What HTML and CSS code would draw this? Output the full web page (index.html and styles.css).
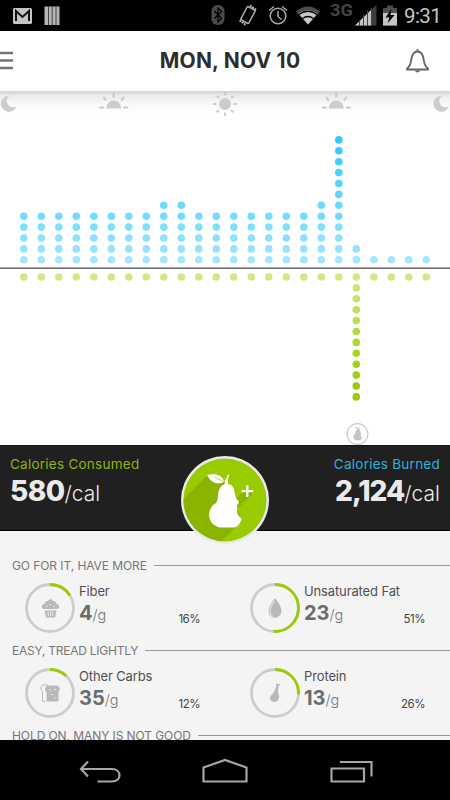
FILE: index.html
```html
<!DOCTYPE html>
<html lang="en">
<head>
    <meta charset="UTF-8">
    <meta name="viewport" content="width=device-width, initial-scale=1.0">
    <title>Daily Calories</title>
    <link rel="stylesheet" href="styles.css">
</head>
<body>
    <div class="status-bar">
        <svg class="status-icons" width="400" height="31" viewBox="0 0 400 31">
            <rect x="13" y="8" width="19" height="16" rx="1.5" fill="#c4c4c4"/>
            <path d="M16 21V11l6.500 6 6.500-6v10" fill="none" stroke="#111" stroke-width="2"/>
            <path d="M44.500 6.500h15V25h-15z" fill="#b5b5b5"/>
            <path d="M48.500 6v19M52.200 6v19M56 6v19" stroke="#444" stroke-width="1"/>
            <rect x="211.500" y="5" width="13" height="20" rx="6" fill="#4a4a4a"/>
            <path d="M214.500 11l7 7.500-3.500 3.500V8l3.500 3.500-7 7" fill="none" stroke="#000" stroke-width="1.300"/>
            <g fill="none" stroke="#aaa">
                <rect x="243.500" y="7.500" width="9" height="15" rx="1" stroke-width="1.500" transform="rotate(28 248 15)"/>
                <path d="M239.500 20.500l6.500 4.500M250 5.500l6.500 4.500" stroke-width="2" stroke-dasharray="2 .7"/>
                <circle cx="278" cy="16" r="7.800" stroke-width="1.500"/>
                <path d="M278 11v5.500l3.500 3M269 10.500l5-4M282 6.500l5 4" stroke-width="1.500"/>
            </g>
            <path d="M308 24.500L296 11.500Q308 1.500 320 11.500z" fill="#4d4d4d"/>
            <path d="M308 24.500l-9.500-11Q308 7 317.500 13.500z" fill="#c9c9c9"/>
            <path d="M299 14.500Q308 8 317 14.500M302.500 18.500Q308 14.500 313.500 18.500" fill="none" stroke="#000" stroke-width="1.300"/>
            <text class="network" x="330" y="16" textLength="23" lengthAdjust="spacingAndGlyphs">3G</text>
            <path d="M355 25.500L376.500 5v20.500z" fill="#3d3d3d"/>
            <path d="M355 25.500l16.500-16v16z" fill="#c4c4c4"/>
            <path d="M359.500 20v6M363.500 14v12M367.500 10v16M371.500 8v18" stroke="#444"/>
            <path d="M383 25.500V8h4V5.500h6V8h4v17.500z" fill="#4d4d4d"/>
            <path d="M383 13h14v12.500h-14z" fill="#c4c4c4"/>
            <path d="M391.500 9l-6 8.500h4l-2 6 7-8.500h-4z" fill="#000"/>
        </svg>
        <span class="clock">9:31</span>
    </div>

    <header>
        <svg class="menu" width="13" height="20" viewBox="0 0 13 20">
            <path d="M0 2h13M0 9.500h13M0 17h13" stroke="#777479" stroke-width="2.500"/>
        </svg>
        <h1>MON, NOV 10</h1>
        <svg class="bell" width="25" height="26" viewBox="0 0 25 26">
            <path d="M2 20.500c4-2.500 3.500-5 4.500-10C7.300 6 9 3.500 12.500 3.500S17.700 6 18.500 10.500c1 5 .5 7.500 4.500 10v1H2z" fill="none" stroke="#666" stroke-width="1.800"/>
            <path d="M10.500 2.500Q12.500-.5 14.500 2.500z M9.500 22.500h6q-3 4-6 0z" fill="#666"/>
        </svg>
    </header>

    <main>
        <svg class="chart" id="chart" width="450" height="354" viewBox="0 91 450 354">
            <defs>
                <g id="moon"><path d="M1-8A8 8 0 1 0 8 2.500A6 6 0 0 1 1-8z"/></g>
                <g id="sunrise">
                    <path d="M-7.500 4.500a7.500 8 0 0 1 15 0z"/>
                    <path d="M-14.500 3.500h5M9.500 3.500h5M-10.500-7l3 3.500M10.500-7l-3 3.500M0-11.500v5" fill="none" stroke="#ccc" stroke-width="2.200"/>
                </g>
                <g id="sun">
                    <circle r="6"/>
                    <path d="M0-12v3.500M0 8.500V12M-12 0h3.500M8.500 0H12M-8.300-8.300l2.300 2.300M6 6l2.300 2.300M-8.300 8.300L-6 6M6-6l2.300-2.300" fill="none" stroke="#ccc" stroke-width="2"/>
                </g>
            </defs>
            <g fill="#ccc">
                <use href="#moon" x="8.500" y="103.700"/>
                <use href="#sunrise" x="113.700" y="104"/>
                <use href="#sun" x="225" y="104"/>
                <use href="#sunrise" x="336.300" y="104"/>
                <use href="#moon" x="441" y="103.700"/>
            </g>
            <path d="M0 267.500h450" stroke="#aaa"/>
            <path d="M0 268.500h450" stroke="#6e6e6e"/>
            <circle cx="357.500" cy="434" r="10.400" fill="none" stroke="#ccc" stroke-width="1.200"/>
            <path d="M356.500 430.500q.5-1.500 1.500-1.500 1.500 0 2 2.500l.7 2.500-.3 2.200 1.100 2.300-1.500 1.500h-4c-3.500-1-2-5-.8-6.200zM358 429.500q0-2 2-2M354.500 427.500q3-.5 3 1.500" fill="#c4c4c4" stroke="#c4c4c4" stroke-width=".7"/>
        </svg>

        <section class="summary">
            <div class="total consumed">
                <div class="label">Calories Consumed</div>
                <div class="value"><b>580</b><span>/cal</span></div>
            </div>
            <svg class="add-food" width="90" height="90" viewBox="0 0 90 90">
                <defs>
                    <clipPath id="badge"><circle cx="45" cy="45" r="41.500"/></clipPath>
                </defs>
                <circle cx="45" cy="45" r="44" fill="#e9e9e9"/>
                <circle cx="45" cy="45" r="41.500" fill="#9c0"/>
                <path d="M27.500 20L-5 52.500V90h43l23.500-24L47 25zM62 37.500L55 44.500V56l18.500-18.500z" fill="#8ab400" clip-path="url(#badge)"/>
                <path d="M46.500 29c4.500-.5 7 2.500 7.800 6.500.6 4.500 1.700 6.500 2.500 9 2 .8 2.400 2.500 1.700 4-2 2-1.500 3.500-1 5-1.500 4 .5 8 4.300 10.300-1.500 4.500-4 8.700-8.300 8.700H42c-9-.5-13.500-7-12.800-14 .5-5 3.300-8.500 6.800-10.500 2.500-3 1.500-7 2.500-11 1-4.500 3.500-7.500 8-8z" fill="#fff"/>
                <path d="M44.500 30q.8-3 0-4.500 2.500-1.500 3-5.500l2-.5q-2 4-1.500 10.500z" fill="#fff"/>
                <path d="M27 20c7-1.500 14-1 17.500 6.500-6 4-13 2-17.500-6.500z" fill="#fff"/>
                <path d="M34.500 22.500l9.500 4" stroke="#9c0" stroke-width=".7"/>
                <path d="M67.300 30.300V42M61.500 36.200h11.800" stroke="#fff" stroke-width="2.300"/>
            </svg>
            <div class="total burned">
                <div class="label">Calories Burned</div>
                <div class="value"><b>2,124</b><span>/cal</span></div>
            </div>
        </section>

        <section class="nutrients">
            <h2 class="more"><span>GO FOR IT, HAVE MORE</span></h2>
            <div class="row">
                <div class="nutrient">
                    <svg class="ring" width="50" height="50" viewBox="0 0 50 50">
                        <circle class="track" cx="25" cy="25" r="23.500"/>
                        <circle class="progress" cx="25" cy="25" r="23.500" pathLength="100" stroke-dasharray="16 100"/>
                        <path d="M19 26c-3 0-3-5 .5-5 .5-3 2.500-3 3.500-3 1-2.500 4.500-2.500 5 0 2 0 3 1 3.500 3 3.500 0 3.500 5 .5 5z" fill="#b9b9b9"/>
                        <path d="M19.500 27.500h12l-1.500 7h-9z" fill="#b9b9b9"/>
                        <path d="M23 28.500l.5 4.500M25.500 28.500V33M28 28.500l-.5 4.500M21 23.500h1.500M24.500 21.500H26M28.500 23.500H30" stroke="#f4f4f4" stroke-width=".8"/>
                    </svg>
                    <div class="info">
                        <div class="name">Fiber</div>
                        <div class="amount"><b>4</b><span>/g</span></div>
                    </div>
                    <div class="percent">16%</div>
                </div>
                <div class="nutrient">
                    <svg class="ring" width="50" height="50" viewBox="0 0 50 50">
                        <circle class="track" cx="25" cy="25" r="23.500"/>
                        <circle class="progress" cx="25" cy="25" r="23.500" pathLength="100" stroke-dasharray="51 100"/>
                        <path d="M25 15q6.500 8.500 6.500 13a6.500 6.700 0 0 1-13 0Q18.500 23.500 25 15z" fill="#b9b9b9"/>
                        <path d="M24.500 18q-5 7-4.500 10.500.5 3.500 3 5" fill="none" stroke="#f4f4f4" stroke-width=".9"/>
                    </svg>
                    <div class="info">
                        <div class="name">Unsaturated Fat</div>
                        <div class="amount"><b>23</b><span>/g</span></div>
                    </div>
                    <div class="percent">51%</div>
                </div>
            </div>

            <h2 class="easy"><span>EASY, TREAD LIGHTLY</span></h2>
            <div class="row">
                <div class="nutrient">
                    <svg class="ring" width="50" height="50" viewBox="0 0 50 50">
                        <circle class="track" cx="25" cy="25" r="23.500"/>
                        <circle class="progress" cx="25" cy="25" r="23.500" pathLength="100" stroke-dasharray="12 100"/>
                        <path d="M21.500 24c-2.500-2-1.500-6.500 2-6.500h8c3.500 0 4 4.500 2 6.500v9.500h-12z" fill="#b9b9b9"/>
                        <path d="M23 17h-4c-3.500 0-4 4.500-1.500 6.500v10H20" fill="none" stroke="#b9b9b9"/>
                        <path d="M24 22h1.500M29.500 21.500H31M26 26.500h1.500M29.500 30H31" stroke="#f4f4f4"/>
                    </svg>
                    <div class="info">
                        <div class="name">Other Carbs</div>
                        <div class="amount"><b>35</b><span>/g</span></div>
                    </div>
                    <div class="percent">12%</div>
                </div>
                <div class="nutrient">
                    <svg class="ring" width="50" height="50" viewBox="0 0 50 50">
                        <circle class="track" cx="25" cy="25" r="23.500"/>
                        <circle class="progress" cx="25" cy="25" r="23.500" pathLength="100" stroke-dasharray="26 100"/>
                        <path d="M26.500 17.500q-1.500-2 .5-2 1 1 3 .5.5 1.500-1.500 2l-.5 7c2.500 4 .5 9-3.500 9-4.500 0-5.500-4-3.500-6.500 2-2 4-4.500 5.500-10z" fill="#b9b9b9"/>
                    </svg>
                    <div class="info">
                        <div class="name">Protein</div>
                        <div class="amount"><b>13</b><span>/g</span></div>
                    </div>
                    <div class="percent">26%</div>
                </div>
            </div>

            <h2 class="hold"><span>HOLD ON, MANY IS NOT GOOD</span></h2>
        </section>
    </main>

    <nav>
        <svg width="450" height="60" viewBox="0 0 450 60" fill="none" stroke="#a5a5a5" stroke-width="2.200">
            <path d="M88 21.500l-7 7.500 7 7.500M81 29h31c10 0 10 12.500 0 12.500H97.500"/>
            <path d="M203.500 41.500V27.500L225 20l21.500 7.500v14z"/>
            <path d="M331.500 28.500h32.500v13h-32.500zM340 22h31.500v14.500"/>
        </svg>
    </nav>

    <script>
        // one entry per hour
        const burned = [5, 5, 5, 5, 5, 5, 5, 5, 6, 6, 5, 5, 5, 5, 5, 5, 5, 6, 12, 2, 1, 1, 1, 1];
        const consumed = burned.map((_, hour) => hour === 19 ? 12 : 1);
        const chart = document.getElementById('chart');

        function mix(from, to, amount) {
            return 'rgb(' + from.map((c, i) => Math.round(c + (to[i] - c) * amount)).join(',') + ')';
        }

        function drawDots(counts, startY, step, from, to) {
            counts.forEach((count, hour) => {
                for (let i = 0; i < count; i++) {
                    const dot = document.createElementNS('http://www.w3.org/2000/svg', 'circle');
                    dot.setAttribute('cx', 23.8 + hour * 17.5);
                    dot.setAttribute('cy', startY + i * step);
                    dot.setAttribute('r', 3.8);
                    dot.setAttribute('fill', mix(from, to, Math.min(i / 10, 1)));
                    chart.appendChild(dot);
                }
            });
        }

        drawDots(burned, 259.8, -10.9, [160, 231, 255], [51, 204, 255]);
        drawDots(consumed, 277, 10.9, [209, 232, 133], [153, 204, 0]);
    </script>
</body>
</html>
```
FILE: styles.css
```css
body {
    width: 450px;
    height: 800px;
    margin: 0;
    overflow: hidden;
    display: flex;
    flex-direction: column;
    font-family: Inter, Arial, sans-serif;
    background-color: #fff;
}

svg {
    display: block;
    flex-shrink: 0;
}

.status-bar {
    display: flex;
    height: 31px;
    flex-shrink: 0;
    background-color: #000;
}

.network {
    font: bold 16px Roboto, sans-serif;
    fill: #444;
}

.clock {
    margin-left: 4px;
    font: 20.5px/32px Roboto, sans-serif;
    letter-spacing: -0.6px;
    color: #c4c4c4;
}

header {
    display: flex;
    align-items: center;
    height: 60px;
    flex-shrink: 0;
    padding-right: 20px;
}

h1 {
    flex: 1;
    margin: 0;
    padding-left: 42px;
    text-align: center;
    font-size: 21px;
    line-height: 60px;
    font-weight: 700;
    letter-spacing: 0.2px;
    color: #2d2d2d;
}

main {
    height: 649px;
    overflow: hidden;
}

.chart {
    background: linear-gradient(#d2d2d2, #ececec 5px, #fafafa 14px, #fff 24px);
}

.summary {
    display: flex;
    justify-content: space-between;
    position: relative;
    height: 86px;
    padding: 0 10px;
    box-sizing: border-box;
    background-color: #202020;
    border-top: 1px solid #111;
    border-bottom: 1px solid #000;
}

.add-food {
    position: absolute;
    left: 180px;
    top: 9px;
}

.label {
    margin-top: 9px;
    font-size: 13.5px;
    line-height: 18px;
    letter-spacing: 0.25px;
    white-space: nowrap;
}

.consumed .label {
    color: #8db510;
}

.burned {
    text-align: right;
}

.burned .label {
    color: #2fb1df;
}

.value {
    line-height: 36px;
    color: #eaeaea;
    white-space: nowrap;
}

.value b {
    font-size: 28px;
    font-weight: 800;
    letter-spacing: -0.6px;
}

.burned b {
    letter-spacing: -1px;
}

.value span {
    font-size: 21px;
    font-weight: 300;
}

.nutrients {
    padding-top: 25px;
    background-color: #f4f4f4;
}

h2 {
    display: flex;
    align-items: center;
    gap: 7px;
    height: 18px;
    margin: 0 0 0 12px;
    font-size: 12px;
    font-weight: 400;
    letter-spacing: -0.08px;
    color: #777;
    white-space: nowrap;
}

.easy {
    letter-spacing: -0.25px;
}

h2::after {
    content: "";
    flex: 1;
    height: 1px;
    background-color: #999;
}

.row {
    display: grid;
    grid-template-columns: 225px 225px;
    height: 67px;
}

.nutrient {
    display: flex;
    padding: 9px 25px 0;
}

.track,
.progress {
    fill: none;
    stroke: #ccc;
    stroke-width: 2.8;
}

.progress {
    stroke: #9c0;
    transform: rotate(-90deg);
    transform-origin: 25px 25px;
}

.info {
    flex: 1;
    margin-left: 4px;
}

.name {
    height: 18px;
    margin-top: -1px;
    font-size: 13px;
    line-height: 18px;
    letter-spacing: -0.13px;
    color: #505050;
    white-space: nowrap;
}

.amount {
    line-height: 26px;
    color: #777;
}

.amount b {
    font-size: 20px;
    font-weight: 700;
    color: #6c6c6c;
}

.amount span {
    font-size: 14.5px;
    font-weight: 300;
}

.percent {
    margin-top: 28px;
    font-size: 11.5px;
    line-height: 16px;
    letter-spacing: -0.5px;
    color: #444;
}

nav {
    height: 60px;
    flex-shrink: 0;
    background-color: #000;
}
```
